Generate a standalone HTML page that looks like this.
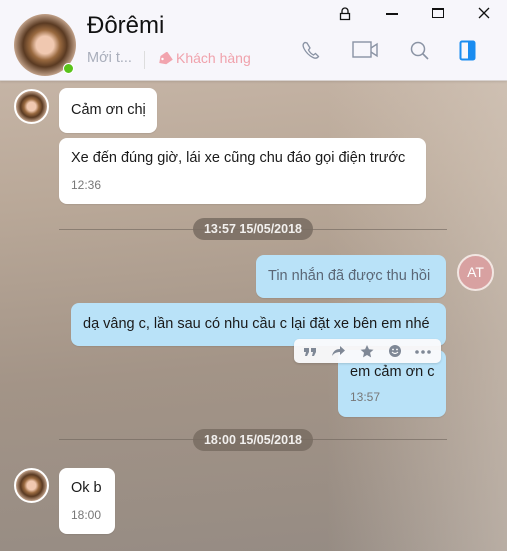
<!DOCTYPE html>
<html><head><meta charset="utf-8"><style>
*{margin:0;padding:0;box-sizing:border-box}
body{width:507px;height:551px;overflow:hidden;position:relative;font-family:"Segoe UI","Liberation Sans","DejaVu Sans",sans-serif;background:linear-gradient(175deg,#cdbcae 0%,#b9a898 35%,#a39487 65%,#958b83 100%)}
.bgr{position:absolute;right:0;top:81px;width:180px;height:470px;background:linear-gradient(90deg,rgba(220,205,192,0),rgba(220,208,196,.5))}
.hdr{position:absolute;left:0;top:0;width:507px;height:81px;background:#f7f6fb;border-bottom:1px solid #d8d2d0;box-shadow:0 1px 2px rgba(0,0,0,.1)}
.av{position:absolute;border-radius:50%;background:radial-gradient(circle at 50% 50%,#f0c8b0 0 20%,#9a6a40 34%,#5a3a22 50%,#c8a890 72%,#e6d2c8 100%);border:2px solid #fff}
.b{position:absolute;border-radius:8px;font-size:14.5px;color:#1a1a1a;padding:0 12px;box-shadow:0 1px 1px rgba(0,0,0,.08);white-space:nowrap}
.w{background:#fff}.bl{background:#b9e2f8}
.t{position:absolute;left:12px;font-size:12px;color:#777}
.pill{position:absolute;left:193px;width:120px;height:22px;border-radius:11px;background:rgba(120,108,98,.85);color:#f2f0ee;font-size:12.5px;font-weight:bold;text-align:center;line-height:22px}
.ln{position:absolute;left:59px;width:388px;height:1px;background:rgba(110,100,92,.6)}
</style></head><body>
<div class="bgr"></div>
<div class="hdr">
 <div class="av" style="left:14px;top:14px;width:62px;height:62px;border:none"></div>
 <div style="position:absolute;left:63px;top:63px;width:11px;height:11px;border-radius:50%;background:#5ac31a;border:1.5px solid #fff"></div>
 <div style="position:absolute;left:87px;top:12px;font-size:24px;color:#111">Đôrêmi</div>
 <div style="position:absolute;left:87px;top:50px;font-size:14.5px;color:#a9aebb">Mới t...</div>
 <div style="position:absolute;left:144px;top:51px;width:1px;height:18px;background:#ddd"></div>
 <svg style="position:absolute;left:157px;top:52px" width="16" height="14" viewBox="0 0 16 14"><path d="M1 7L6 2H14V12H6Z" fill="#f2a4ae" transform="rotate(-35 8 7)"/><circle cx="5.5" cy="7" r="1.2" fill="#fff"/></svg>
 <div style="position:absolute;left:176px;top:50px;font-size:14px;color:#f0a2ac">Khách hàng</div>
 <svg style="position:absolute;left:338px;top:7px" width="14" height="14" viewBox="0 0 14 14"><path d="M4 6V4a3 3 0 0 1 6 0v2M2.5 6.5h9v6h-9z" fill="none" stroke="#111" stroke-width="1.3"/></svg>
 <div style="position:absolute;left:386px;top:13px;width:12px;height:1.5px;background:#111"></div>
 <div style="position:absolute;left:432px;top:8px;width:12px;height:10px;border:1.3px solid #111;border-top-width:2px"></div>
 <svg style="position:absolute;left:478px;top:7px" width="12" height="12"><path d="M1 1L11 11M11 1L1 11" stroke="#111" stroke-width="1.3"/></svg>
 <svg style="position:absolute;left:301px;top:40px" width="20" height="20" viewBox="0 0 20 20"><path d="M4 2.5c-2 1-2.5 3-1 6 2 4 5 7 9 9 2.5 1.2 4.5.5 5.5-1l-3-3-2 1.5c-2-1-4-3-5-5L9 8 6 3z" fill="none" stroke="#8a93a4" stroke-width="1.3"/></svg>
 <svg style="position:absolute;left:352px;top:40px" width="28" height="20" viewBox="0 0 28 20"><rect x="1" y="2" width="18" height="15" fill="none" stroke="#8a93a4" stroke-width="1.4"/><path d="M19 8l6-4v12l-6-4" fill="none" stroke="#8a93a4" stroke-width="1.4"/></svg>
 <svg style="position:absolute;left:409px;top:40px" width="22" height="22" viewBox="0 0 22 22"><circle cx="9" cy="9" r="6.5" fill="none" stroke="#8a93a4" stroke-width="1.5"/><path d="M14 14l5 5" stroke="#8a93a4" stroke-width="1.6"/></svg>
 <svg style="position:absolute;left:459px;top:40px" width="18" height="22" viewBox="0 0 18 22"><rect x="1.5" y="1.5" width="14" height="18" rx="1.5" fill="none" stroke="#1a8cf0" stroke-width="2"/><rect x="9" y="1.5" width="6.5" height="18" fill="#1a8cf0"/></svg>
</div>

<div class="av" style="left:14px;top:89px;width:35px;height:35px"></div>
<div class="b w" style="left:59px;top:88px;width:98px;height:45px;line-height:45px">Cảm ơn chị</div>
<div class="b w" style="left:59px;top:138px;width:367px;height:66px"><div style="position:absolute;left:12px;top:12px">Xe đến đúng giờ, lái xe cũng chu đáo gọi điện trước</div><div class="t" style="top:40px">12:36</div></div>

<div class="ln" style="top:229px"></div><div class="pill" style="top:218px">13:57 15/05/2018</div>

<div class="b bl" style="left:256px;top:255px;width:190px;height:43px;line-height:43px;color:#5b6776">Tin nhắn đã được thu hồi</div>
<div style="position:absolute;left:457px;top:254px;width:37px;height:37px;border-radius:50%;background:#d8a1a1;border:2px solid #f2e6e2;color:#fff;font-size:14px;text-align:center;line-height:33px">AT</div>
<div class="b bl" style="left:71px;top:303px;width:375px;height:43px;line-height:43px">dạ vâng c, lần sau có nhu cầu c lại đặt xe bên em nhé</div>
<div class="b bl" style="left:338px;top:350px;width:108px;height:67px"><div style="position:absolute;left:12px;top:14px">em cảm ơn c</div><div class="t" style="top:40px">13:57</div></div>
<div style="position:absolute;left:294px;top:339px;width:147px;height:24px;border-radius:5px;background:rgba(250,250,252,.95);box-shadow:0 1px 2px rgba(0,0,0,.15)">
 <svg width="147" height="24" viewBox="0 0 147 24">
  <path d="M10 9h5v4l-2 4h-2l1-4h-2zM17 9h5v4l-2 4h-2l1-4h-2z" fill="#7f8896"/>
  <path d="M38 17c1-5 4-7 8-7V7l5 4.5-5 4.5v-3c-3 0-6 1-8 4z" fill="#7f8896"/>
  <path d="M73 6l2 4.3 4.5.5-3.4 3 1 4.6L73 16l-4 2.4 1-4.6-3.4-3 4.5-.5z" fill="#7f8896"/>
  <circle cx="101" cy="12" r="6" fill="#7f8896"/><circle cx="99" cy="10.5" r=".9" fill="#fff"/><circle cx="103" cy="10.5" r=".9" fill="#fff"/><path d="M98 13q3 3 6 0" stroke="#fff" stroke-width="1.1" fill="none"/>
  <circle cx="123" cy="13" r="1.8" fill="#7f8896"/><circle cx="129" cy="13" r="1.8" fill="#7f8896"/><circle cx="135" cy="13" r="1.8" fill="#7f8896"/>
 </svg>
</div>

<div class="ln" style="top:439px"></div><div class="pill" style="top:429px">18:00 15/05/2018</div>

<div class="av" style="left:14px;top:468px;width:35px;height:35px"></div>
<div class="b w" style="left:59px;top:468px;width:56px;height:66px"><div style="position:absolute;left:12px;top:12px">Ok b</div><div class="t" style="top:40px">18:00</div></div>
</body></html>
